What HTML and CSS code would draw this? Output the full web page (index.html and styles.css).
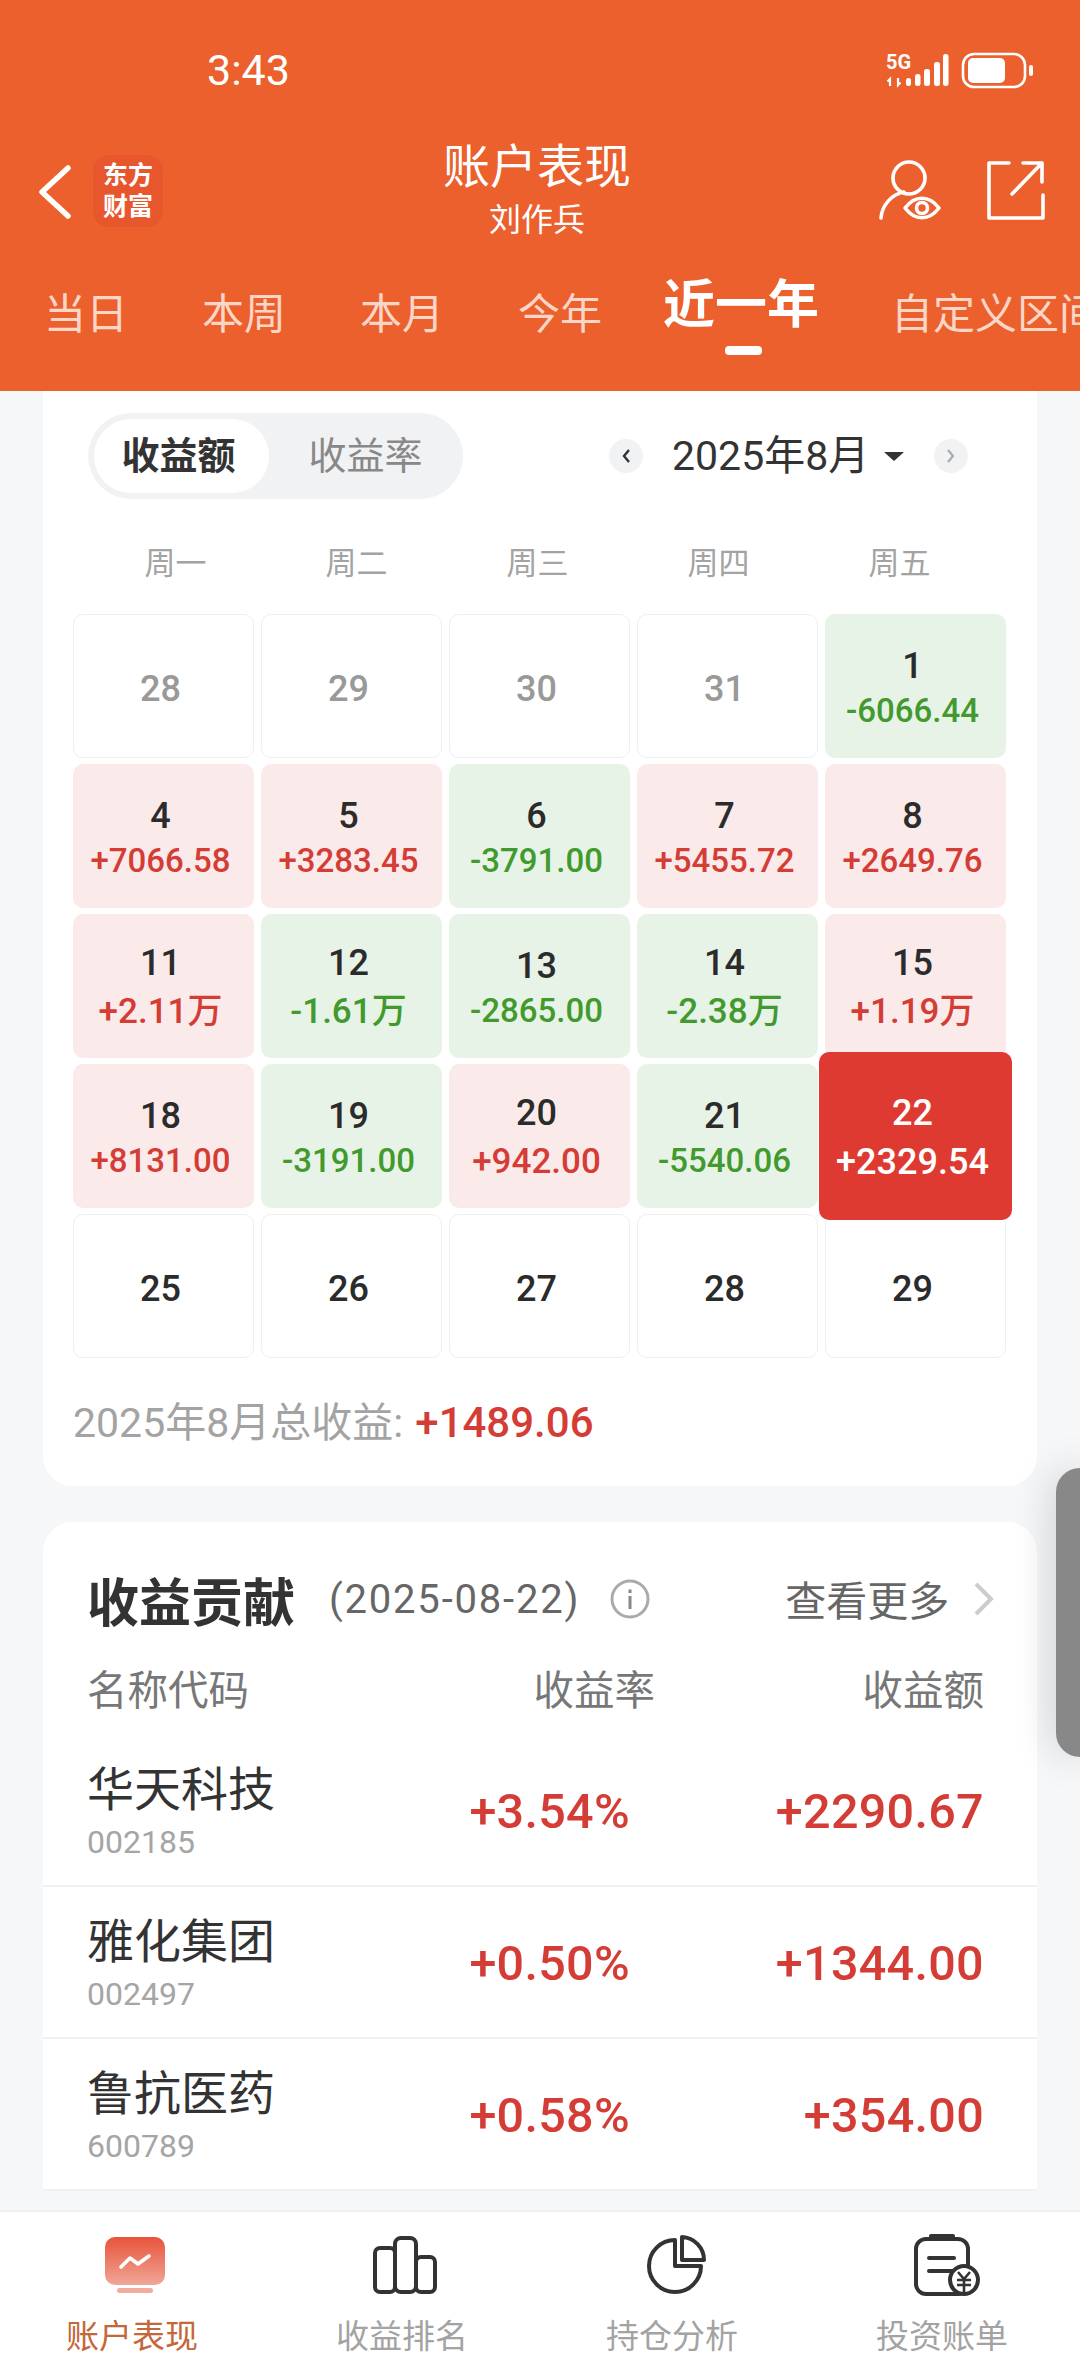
FILE: index.html
```html
<!DOCTYPE html>
<html lang="zh-CN">
<head>
    <meta charset="UTF-8">
    <meta name="viewport" content="width=device-width, initial-scale=1.0">
    <title>账户表现</title>
    <link rel="stylesheet" href="styles.css">
</head>
<body>
    <header class="top">
        <div class="status-bar">
            <span class="clock">3:43</span>
            <svg class="status-icons" width="152" height="40" viewBox="884 48 152 40">
                <text x="885" y="67" class="net-label">5G</text>
                <path d="M889 84v-7l-2.5 2.5M897 76v7l2.5-2.5" fill="none" stroke="#fff" stroke-width="2.2"/>
                <rect x="905" y="76" width="5" height="8" rx="2.5" fill="#fff"/>
                <rect x="914" y="72" width="5.5" height="12" rx="2.5" fill="#fff"/>
                <rect x="923" y="67" width="6" height="17" rx="2.5" fill="#fff"/>
                <rect x="933" y="60" width="6" height="24" rx="2.5" fill="#fff"/>
                <rect x="942" y="52" width="5.5" height="32" rx="2.5" fill="#fff"/>
                <rect x="962" y="52" width="62" height="33" rx="11" fill="none" stroke="#fff" stroke-width="2.6"/>
                <rect x="967" y="56" width="37" height="25" rx="5" fill="#fff"/>
                <rect x="1028" y="63" width="4" height="11" rx="2" fill="#fff"/>
            </svg>
        </div>
        <div class="title-bar">
            <div class="title-left">
                <svg width="34" height="56" viewBox="38 162 34 56">
                    <path d="M68 167L42 191L68 215" fill="none" stroke="#fff" stroke-width="5.5" stroke-linecap="round" stroke-linejoin="round"/>
                </svg>
                <div class="logo">东方<br>财富</div>
            </div>
            <div class="title-center">
                <div class="title-main">账户表现</div>
                <div class="title-sub">刘作兵</div>
            </div>
            <div class="title-right">
                <svg width="172" height="64" viewBox="876 158 172 64" fill="none" stroke="#fff" stroke-width="3.6" stroke-linecap="round" stroke-linejoin="round">
                    <circle cx="909" cy="177" r="16"/>
                    <path d="M881 217C882 204 892 193 904 191"/>
                    <path d="M905 207C915 194 929 194 939 207C929 220 915 220 905 207Z"/>
                    <circle cx="922" cy="207" r="5.5"/>
                    <path d="M1009 162H989V217H1043V194"/>
                    <path d="M1012 193L1042 162M1023 162H1042V181"/>
                </svg>
            </div>
        </div>
        <nav class="tabs">
            <span class="tab">当日</span>
            <span class="tab">本周</span>
            <span class="tab">本月</span>
            <span class="tab">今年</span>
            <span class="tab tab-active">近一年</span>
            <span class="tab">自定义区间</span>
        </nav>
    </header>

    <main class="content">
        <section class="card calendar-card">
            <div class="toolbar">
                <div class="segment">
                    <span class="segment-item segment-on">收益额</span>
                    <span class="segment-item">收益率</span>
                </div>
                <div class="month-nav">
                    <span class="month-btn">
                        <svg width="12" height="18" viewBox="0 0 12 18"><path d="M9 3L4 9L9 15" fill="none" stroke="#333" stroke-width="2.4"/></svg>
                    </span>
                    <span class="month-label">2025年8月</span>
                    <span class="month-caret"></span>
                    <span class="month-btn">
                        <svg width="12" height="18" viewBox="0 0 12 18"><path d="M3 3L8 9L3 15" fill="none" stroke="#aaa" stroke-width="2.2"/></svg>
                    </span>
                </div>
            </div>

            <div class="weekdays">
                <span>周一</span><span>周二</span><span>周三</span><span>周四</span><span>周五</span>
            </div>

            <div class="days">
                <div class="day empty muted"><b>28</b></div>
                <div class="day empty muted"><b>29</b></div>
                <div class="day empty muted"><b>30</b></div>
                <div class="day empty muted"><b>31</b></div>
                <div class="day down"><b>1</b><i>-6066.44</i></div>

                <div class="day up"><b>4</b><i>+7066.58</i></div>
                <div class="day up"><b>5</b><i>+3283.45</i></div>
                <div class="day down"><b>6</b><i>-3791.00</i></div>
                <div class="day up"><b>7</b><i>+5455.72</i></div>
                <div class="day up"><b>8</b><i>+2649.76</i></div>

                <div class="day up big"><b>11</b><i>+2.11万</i></div>
                <div class="day down big"><b>12</b><i>-1.61万</i></div>
                <div class="day down"><b>13</b><i>-2865.00</i></div>
                <div class="day down big"><b>14</b><i>-2.38万</i></div>
                <div class="day up big"><b>15</b><i>+1.19万</i></div>

                <div class="day up"><b>18</b><i>+8131.00</i></div>
                <div class="day down"><b>19</b><i>-3191.00</i></div>
                <div class="day up big"><b>20</b><i>+942.00</i></div>
                <div class="day down"><b>21</b><i>-5540.06</i></div>
                <div class="day selected big"><b>22</b><i>+2329.54</i></div>

                <div class="day empty"><b>25</b></div>
                <div class="day empty"><b>26</b></div>
                <div class="day empty"><b>27</b></div>
                <div class="day empty"><b>28</b></div>
                <div class="day empty"><b>29</b></div>
            </div>

            <div class="month-total">2025年8月总收益: <strong>+1489.06</strong></div>
        </section>

        <section class="card contrib-card">
            <div class="contrib-head">
                <h2>收益贡献</h2>
                <span class="contrib-date">(2025-08-22)</span>
                <svg class="info-icon" width="40" height="40" viewBox="0 0 40 40">
                    <circle cx="20" cy="20" r="18" fill="none" stroke="#aaa" stroke-width="3"/>
                    <rect x="18.5" y="17" width="3" height="13" fill="#888"/>
                    <rect x="18.5" y="10.5" width="3" height="3.5" fill="#888"/>
                </svg>
                <span class="more">查看更多</span>
                <svg width="22" height="34" viewBox="0 0 22 34"><path d="M3 2L18 17L3 32" fill="none" stroke="#ccc" stroke-width="4"/></svg>
            </div>

            <div class="contrib-labels">
                <span>名称代码</span>
                <span>收益率</span>
                <span>收益额</span>
            </div>

            <div class="stock-row">
                <div class="stock-name"><div>华天科技</div><small>002185</small></div>
                <div class="stock-num">+3.54%</div>
                <div class="stock-num">+2290.67</div>
            </div>
            <div class="stock-row">
                <div class="stock-name"><div>雅化集团</div><small>002497</small></div>
                <div class="stock-num">+0.50%</div>
                <div class="stock-num">+1344.00</div>
            </div>
            <div class="stock-row">
                <div class="stock-name"><div>鲁抗医药</div><small>600789</small></div>
                <div class="stock-num">+0.58%</div>
                <div class="stock-num">+354.00</div>
            </div>
        </section>
    </main>

    <div class="side-handle"></div>

    <footer class="bottom-nav">
        <div class="nav-item nav-on">
            <svg width="60" height="60" viewBox="0 0 60 60">
                <defs>
                    <linearGradient id="screenFill" x1="0" y1="0" x2="0" y2="1">
                        <stop offset="0" stop-color="#e8533a"/>
                        <stop offset="1" stop-color="#f0a697"/>
                    </linearGradient>
                </defs>
                <rect x="0" y="2" width="60" height="48" rx="10" fill="url(#screenFill)"/>
                <rect x="12" y="53" width="36" height="5" rx="2.5" fill="#f0ad9f"/>
                <path d="M16 32L25 23L33 29L44 21" fill="none" stroke="#fff" stroke-width="3.6" stroke-linecap="round" stroke-linejoin="round"/>
            </svg>
            <span>账户表现</span>
        </div>
        <div class="nav-item">
            <svg width="66" height="60" viewBox="0 0 66 60" fill="none" stroke="#333" stroke-width="4" stroke-linejoin="round">
                <rect x="3" y="13" width="20" height="44" rx="5"/>
                <rect x="23" y="3" width="21" height="54" rx="6"/>
                <rect x="44" y="22" width="19" height="35" rx="5"/>
            </svg>
            <span>收益排名</span>
        </div>
        <div class="nav-item">
            <svg width="62" height="60" viewBox="644 2234 62 60" fill="none" stroke="#333" stroke-width="4" stroke-linejoin="round">
                <path d="M675 2239A26 26 0 1 0 701 2265H675Z"/>
                <path d="M682 2236A23 23 0 0 1 704 2259H682Z"/>
            </svg>
            <span>持仓分析</span>
        </div>
        <div class="nav-item nav-bill">
            <svg width="66" height="62" viewBox="0 0 66 62">
                <rect x="2" y="5" width="52" height="55" rx="10" fill="none" stroke="#333" stroke-width="4"/>
                <rect x="15" y="0" width="26" height="5" rx="2" fill="#333"/>
                <path d="M15 24H40M15 37H38" stroke="#333" stroke-width="4" stroke-linecap="round"/>
                <circle cx="50" cy="46" r="14" fill="#fff" stroke="#333" stroke-width="4"/>
                <path d="M44 38L50 45L56 38M43 46H57M43 51H57M50 45V58" fill="none" stroke="#333" stroke-width="2.6"/>
            </svg>
            <span>投资账单</span>
        </div>
    </footer>
</body>
</html>
```

FILE: styles.css
```css
* {
    box-sizing: border-box;
}
body {
    position: relative;
    display: flex;
    flex-direction: column;
    width: 1080px;
    height: 2376px;
    margin: 0;
    overflow: hidden;
    font-family: Roboto, "Noto Sans CJK SC", sans-serif;
    background-color: #f6f7f9;
    color: #333;
}

/* orange header */
.top {
    height: 391px;
    background-color: #eb602d;
    color: #fff;
    flex-shrink: 0;
}
.status-bar {
    display: flex;
    justify-content: space-between;
    align-items: center;
    height: 132px;
    padding: 8px 43px 0 207px;
}
.clock {
    font-size: 43px;
}
.net-label {
    font-size: 20px;
    font-weight: 700;
    fill: #fff;
}
.title-bar {
    display: grid;
    grid-template-columns: 1fr auto 1fr;
    align-items: center;
    height: 118px;
}
.title-left {
    display: flex;
    align-items: center;
    gap: 21px;
    padding-left: 38px;
}
.logo {
    width: 70px;
    height: 72px;
    padding-top: 5px;
    border-radius: 16px;
    background-color: #e8562e;
    font-size: 25px;
    font-weight: 700;
    line-height: 31px;
    text-align: center;
}
.title-center {
    padding: 0 6px 0 0;
    text-align: center;
}
.title-main {
    font-size: 47px;
    line-height: 56px;
}
.title-sub {
    padding-top: 2px;
    font-size: 32px;
    line-height: 46px;
}
.title-right {
    display: flex;
    justify-content: flex-end;
    padding-right: 32px;
}
.tabs {
    display: flex;
    align-items: flex-start;
    height: 141px;
    padding: 37px 0 0 7px;
    overflow: hidden;
    white-space: nowrap;
}
.tab {
    flex-shrink: 0;
    padding: 0 37px;
    font-size: 42px;
    line-height: 56px;
    color: #fbd6c7;
}
.tab-active {
    position: relative;
    margin-top: -9px;
    padding: 0 35px 0 24px;
    font-size: 52px;
    font-weight: 700;
    color: #fff;
}
.tab-active::after {
    content: "";
    position: absolute;
    top: 68px;
    left: 86px;
    width: 37px;
    height: 9px;
    border-radius: 4px;
    background-color: #fff;
}

/* scrolling content */
.content {
    flex: 1;
    overflow: hidden;
    padding: 0 43px;
}
.card {
    background-color: #fff;
}
.calendar-card {
    padding: 22px 0 38px;
    border-radius: 0 0 30px 30px;
}
.toolbar {
    display: flex;
    align-items: center;
    padding-left: 45px;
}
.segment {
    display: flex;
    align-items: center;
    width: 375px;
    height: 86px;
    padding: 0 6px;
    border-radius: 43px;
    background-color: #f1f2f4;
}
.segment-item {
    width: 175px;
    height: 74px;
    padding-right: 6px;
    border-radius: 37px;
    font-size: 38px;
    line-height: 74px;
    text-align: center;
    color: #888;
}
.segment-on {
    background-color: #fff;
    font-weight: 700;
    color: #333;
}
.segment-on + .segment-item {
    margin-left: 12px;
}
.month-nav {
    display: flex;
    align-items: center;
    margin-left: 146px;
}
.month-btn {
    display: flex;
    justify-content: center;
    align-items: center;
    width: 34px;
    height: 34px;
    border-radius: 50%;
    background-color: #f1f2f4;
}
.month-label {
    margin-left: 29px;
    font-size: 41px;
    line-height: 50px;
    color: #333;
}
.month-caret {
    width: 0;
    height: 0;
    margin: 0 30px 0 15px;
    border-left: 10px solid transparent;
    border-right: 10px solid transparent;
    border-top: 9px solid #333;
}
.weekdays {
    display: grid;
    grid-template-columns: repeat(5, 181px);
    margin-top: 45px;
    padding-left: 42px;
    font-size: 31px;
    line-height: 40px;
    text-align: center;
    color: #a3a3a3;
}
.days {
    display: grid;
    grid-template-columns: repeat(5, 181px);
    grid-auto-rows: 144px;
    gap: 6px 7px;
    margin-top: 30px;
    padding-left: 30px;
}
.day {
    display: flex;
    flex-direction: column;
    justify-content: center;
    align-items: center;
    padding: 6px 6px 0 0;
    border-radius: 10px;
    color: #2b2b2b;
}
.day b {
    font-size: 36px;
    font-weight: 500;
    line-height: 44px;
}
.day i {
    font-size: 33px;
    font-style: normal;
    font-weight: 500;
    line-height: 46px;
}
.big b {
    line-height: 46px;
}
.big i {
    font-size: 35px;
    line-height: 52px;
}
.empty {
    border: 1.5px solid #eeeff1;
}
.muted {
    color: #999;
}
.up {
    background-color: #faeaea;
}
.up i {
    color: #d43c36;
}
.down {
    background-color: #e7f3e6;
}
.down i {
    color: #429a2f;
}
.selected {
    position: relative;
    z-index: 1;
    margin: -12px -6px;
    background-color: #de3a32;
    color: #fff;
}
.selected i {
    font-size: 36px;
}
.month-total {
    margin-top: 40px;
    padding-left: 30px;
    font-size: 41px;
    line-height: 50px;
    color: #a3a3a3;
}
.month-total strong {
    margin-left: 2px;
    font-weight: 500;
    font-size: 42px;
    color: #d43c36;
}

/* contribution list */
.contrib-card {
    margin-top: 36px;
    padding-top: 47px;
    border-radius: 30px 30px 0 0;
}
.contrib-head {
    display: flex;
    align-items: center;
    height: 60px;
    padding-left: 44px;
}
.contrib-head h2 {
    margin: 0;
    font-size: 52px;
    font-weight: 700;
}
.contrib-date {
    margin-left: 34px;
    font-size: 40px;
    letter-spacing: 1.8px;
    color: #666;
}
.info-icon {
    margin-left: 30px;
}
.more {
    margin: 0 24px 3px 135px;
    font-size: 41px;
    color: #666;
}
.contrib-labels {
    display: grid;
    grid-template-columns: 1fr 200px 329px;
    margin: 37px 53px 19px 44px;
    font-size: 40.5px;
    line-height: 50px;
    text-align: right;
    color: #777;
}
.contrib-labels span:first-child {
    text-align: left;
}
.stock-row {
    display: grid;
    grid-template-columns: 1fr 200px 354px;
    align-items: center;
    height: 152px;
    padding: 0 53px 0 44px;
    border-bottom: 2px solid #f0f1f3;
}
.stock-name {
    padding-top: 3px;
    font-size: 47px;
    line-height: 60px;
}
.stock-name small {
    display: block;
    font-size: 32px;
    line-height: 44px;
    color: #a5a5a5;
}
.stock-num {
    padding-top: 2px;
    font-size: 48.5px;
    font-weight: 500;
    letter-spacing: 0.3px;
    text-align: right;
    color: #d43c36;
}

/* floating edge handle */
.side-handle {
    position: absolute;
    top: 1468px;
    right: 0;
    width: 24px;
    height: 289px;
    border-radius: 30px 0 0 30px;
    background-color: #888;
    box-shadow: 0 0 40px rgba(0, 0, 0, 0.22);
}

/* bottom tabs */
.bottom-nav {
    display: grid;
    grid-template-columns: repeat(4, 270px);
    flex-shrink: 0;
    height: 166px;
    padding-top: 22px;
    border-top: 2px solid #eeeff1;
    background-color: #fff;
}
.nav-item {
    display: flex;
    flex-direction: column;
    align-items: center;
    font-size: 33px;
    color: #a3a3a3;
}
.nav-item svg {
    height: 62px;
}
.nav-item span {
    margin-top: 21px;
    padding-right: 6px;
    line-height: 40px;
}
.nav-bill svg {
    margin-left: 3px;
}
.nav-on {
    color: #c4673a;
}
```
